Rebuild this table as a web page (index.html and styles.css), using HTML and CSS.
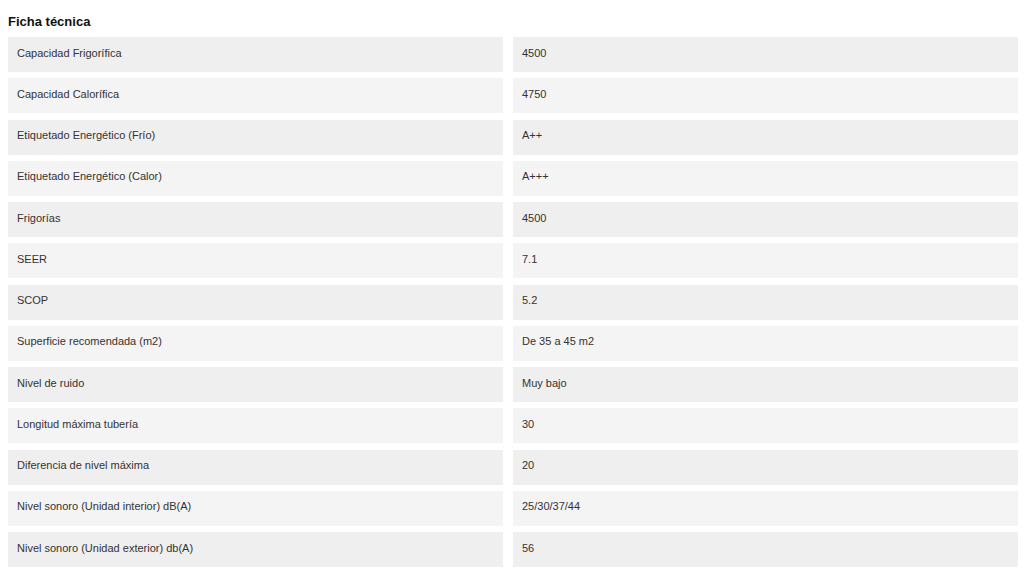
FILE: index.html
```html
<!DOCTYPE html>
<html lang="es">
<head>
<meta charset="utf-8">
<title>Ficha técnica</title>
<link rel="stylesheet" href="styles.css">
</head>
<body>
<section class="spec">
  <h2 class="spec-title">Ficha técnica</h2>
  <div class="spec-table">
    <div class="row"><div class="cell">Capacidad Frigorífica</div><div class="cell">4500</div></div>
    <div class="row"><div class="cell">Capacidad Calorífica</div><div class="cell">4750</div></div>
    <div class="row"><div class="cell">Etiquetado Energético (Frío)</div><div class="cell">A++</div></div>
    <div class="row"><div class="cell">Etiquetado Energético (Calor)</div><div class="cell">A+++</div></div>
    <div class="row"><div class="cell">Frigorías</div><div class="cell">4500</div></div>
    <div class="row"><div class="cell">SEER</div><div class="cell">7.1</div></div>
    <div class="row"><div class="cell">SCOP</div><div class="cell">5.2</div></div>
    <div class="row"><div class="cell">Superficie recomendada (m2)</div><div class="cell">De 35 a 45 m2</div></div>
    <div class="row"><div class="cell">Nivel de ruido</div><div class="cell">Muy bajo</div></div>
    <div class="row"><div class="cell">Longitud máxima tubería</div><div class="cell">30</div></div>
    <div class="row"><div class="cell">Diferencia de nivel máxima</div><div class="cell">20</div></div>
    <div class="row"><div class="cell">Nivel sonoro (Unidad interior) dB(A)</div><div class="cell">25/30/37/44</div></div>
    <div class="row"><div class="cell">Nivel sonoro (Unidad exterior) db(A)</div><div class="cell">56</div></div>
  </div>
</section>
</body>
</html>
```

FILE: styles.css
```css
html, body {
  margin: 0;
  padding: 0;
  background: #ffffff;
}

body {
  font-family: "Liberation Sans", Arial, sans-serif;
  color: #333333;
}

.spec {
  padding: 14px 6px 0 8px;
}

.spec-title {
  margin: 0 0 7px 0;
  font-size: 13px;
  line-height: 16px;
  font-weight: bold;
  color: #111111;
}

.spec-table {
  display: flex;
  flex-direction: column;
  gap: 6.25px;
}

.row {
  display: grid;
  grid-template-columns: 495px 505px;
  column-gap: 10px;
}

.cell {
  height: 35px;
  box-sizing: border-box;
  padding: 0 9px 4px 9px;
  display: flex;
  align-items: center;
  font-size: 11px;
  background: #efefef;
}

.row:nth-child(even) .cell {
  background: #f4f4f4;
}
```
